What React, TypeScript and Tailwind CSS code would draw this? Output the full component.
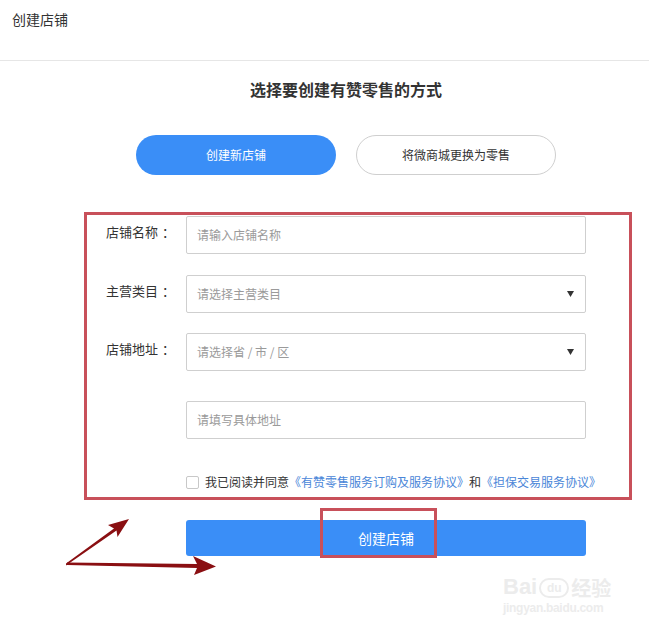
import React from "react";

const FONT = { fontFamily: '"Noto Sans CJK SC", "Noto Sans", sans-serif' };

function Caret() {
  return (
    <svg width="7" height="6" viewBox="0 0 7 6" className="mr-[11px]">
      <polygon points="0,0 7,0 3.5,6" fill="#333" />
    </svg>
  );
}

function Row({ label, placeholder, select, className }: { label?: string; placeholder: string; select?: boolean; className?: string }) {
  return (
    <div className={"flex items-center " + (className || "")}>
      <div className="w-[99px] pl-[19px] text-[13px] text-[#333] leading-none -mt-[8px] flex">
        {label ? (
          <>
            <span>{label}</span>
            <span className="ml-[4px]">：</span>
          </>
        ) : null}
      </div>
      <div className="w-[400px] h-[38px] border border-[#cfcfcf] rounded-[2px] flex items-center justify-between pl-[10px]">
        <span className="text-[12px] text-[#9a9a9a]">{placeholder}</span>
        {select ? <Caret /> : null}
      </div>
    </div>
  );
}

export default function App() {
  return (
    <div className="relative w-[649px] h-[638px] bg-white overflow-hidden" style={FONT}>
      <div className="h-[61px] border-b border-[#e6e6e6] pl-[12px] pt-[9px] text-[14px] text-[#333]">创建店铺</div>

      <div className="ml-[136px] w-[420px] text-center mt-[16px] text-[16px] leading-[24px] font-bold text-[#333]">
        选择要创建有赞零售的方式
      </div>

      <div className="ml-[136px] mt-[34px] flex gap-[20px]">
        <div className="w-[200px] h-[40px] rounded-full bg-[#3a8ef7] text-white text-[12px] flex items-center justify-center">创建新店铺</div>
        <div className="w-[200px] h-[40px] rounded-full border border-[#cfcfcf] text-[#333] text-[12px] flex items-center justify-center">将微商城更换为零售</div>
      </div>

      <div className="ml-[84px] mt-[37px] w-[548px] h-[288px] border-[3px] border-[#c8505a] pt-[1px]">
        <Row label="店铺名称" placeholder="请输入店铺名称" />
        <Row label="主营类目" placeholder="请选择主营类目" select className="mt-[21px]" />
        <Row label="店铺地址" placeholder="请选择省 / 市 / 区" select className="mt-[20px]" />
        <Row placeholder="请填写具体地址" className="mt-[30px]" />
        <div className="flex items-center mt-[34px] pl-[99px]">
          <div className="w-[13px] h-[13px] border border-[#c8c8c8] rounded-[2px] bg-white" />
          <span className="ml-[6px] text-[12px] text-[#333] whitespace-nowrap">
            我已阅读并同意<span className="text-[#4a86d8]">《有赞零售服务订购及服务协议》</span>和<span className="text-[#4a86d8]">《担保交易服务协议》</span>
          </span>
        </div>
      </div>

      <div className="ml-[186px] mt-[20px] w-[400px] h-[36px] rounded-[3px] bg-[#3a8ef7] text-white text-[14px] flex items-center justify-center">
        创建店铺
      </div>

      {/* annotation overlay */}
      <div className="absolute left-[320px] top-[508px] w-[117px] h-[50px] border-[3px] border-[#c8505a]" />
      <svg className="absolute left-[60px] top-[510px]" width="170" height="70" viewBox="0 0 170 70">
        <polygon points="7,52.5 137,54 133,46 156,56.5 134,65 137,58 7,55" fill="#8a0f12" />
        <polygon points="6,55.5 56.5,20.5 57.5,27 69,9 48,15 54,18.5 6,53.5" fill="#8a0f12" />
      </svg>

      {/* watermark */}
      <div className="absolute left-[503px] top-[576px] text-[#ececec] leading-none" style={{ fontFamily: '"Liberation Sans", sans-serif' }}>
        <div className="flex items-end">
          <span className="text-[22px] font-bold">Bai</span>
          <span className="ml-[2px] w-[30px] h-[20px] rounded-full border-2 border-[#ececec] text-[12px] font-bold flex items-center justify-center">du</span>
          <span className="ml-[2px] text-[20px] font-bold" style={FONT}>经验</span>
        </div>
        <div className="mt-[4px] text-[12px] font-bold tracking-tight">jingyan.baidu.com</div>
      </div>
    </div>
  );
}
